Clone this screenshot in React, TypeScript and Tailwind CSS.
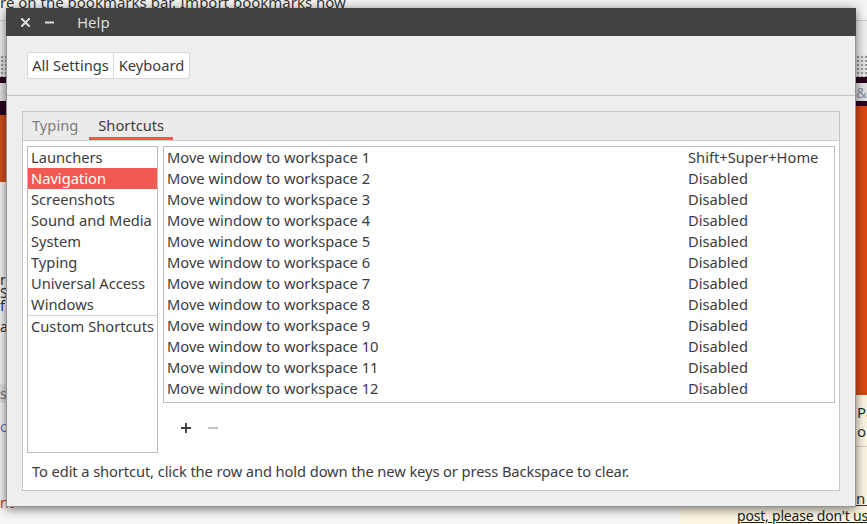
import React from "react";

const categories = [
  "Launchers",
  "Navigation",
  "Screenshots",
  "Sound and Media",
  "System",
  "Typing",
  "Universal Access",
  "Windows",
];

const rows = Array.from({ length: 12 }, (_, i) => ({
  name: `Move window to workspace ${i + 1}`,
  accel: i === 0 ? "Shift+Super+Home" : "Disabled",
}));

function Background() {
  return (
    <div className="flex flex-col w-[867px] h-[524px] bg-white text-[15px] text-[#333]">
      <div className="h-[21px] shrink-0 bg-[#f4f4f3] border-b border-[#cfcfcf] overflow-hidden">
        <p className="-mt-[8px] leading-[21px] whitespace-nowrap">
          re on the bookmarks bar. Import bookmarks now
        </p>
      </div>
      <div className="h-[34px] shrink-0 bg-[#efefef]" />
      <div className="h-[22px] shrink-0 bg-[#e9e9e9] bg-[radial-gradient(#9a9a9a_0.8px,transparent_1px)] bg-[length:4px_4px]" />
      <div className="h-[6px] shrink-0 bg-[#2c001e]" />
      <div className="h-[18px] shrink-0 bg-[#e2e2e2] flex justify-end overflow-hidden">
        <span className="text-[#8a8fa8] leading-[18px]">&amp;</span>
      </div>
      <div className="h-[5px] shrink-0 bg-[#2c001e]" />
      <div className="flex-1 grid grid-cols-[680px_1fr]">
        <div className="flex flex-col bg-[#f7f7f7]">
          <div className="h-[9px] bg-[#2c001e]" />
          <div className="h-[67px] bg-[#d2501c]" />
          <div className="flex flex-col items-start leading-[13px] text-[14px] whitespace-nowrap pt-[91px]">
            <span className="h-[12px]">r</span>
            <span className="h-[12px] mt-px">S</span>
            <span className="h-[12px] mt-px">f</span>
            <span className="mt-[9px]">a</span>
            <span className="mt-[51px] bg-[#e3e3e3] w-[10px] h-[19px] leading-[19px] text-[#777]">s</span>
            <span className="mt-[17px] text-[#5d7fb3]">o</span>
            <span className="mt-[63px] text-[#c8321c]">nt</span>
          </div>
        </div>
        <div className="flex flex-col">
          <div className="h-[289px] bg-[#dd4814]" />
          <div className="flex-1 bg-[#fcf7e2] flex flex-col text-[15px] whitespace-nowrap overflow-hidden">
            <span className="pl-[177px] mt-[8px] leading-[19px]">Pa</span>
            <span className="pl-[177px] leading-[19px]">on</span>
            <div className="h-px bg-[#d6d0b8] mt-[5px]" />
            <span className="pl-[176px] mt-[42px] leading-[18px] underline">n u</span>
            <span className="pl-[57px] leading-[18px] underline text-[#222] text-[14px] tracking-[-0.2px]">post, please don't use</span>
          </div>
        </div>
      </div>
    </div>
  );
}

function Window() {
  return (
    <div className="absolute left-[6px] top-[8px] w-[850px] h-[499px] flex flex-col shadow-[0_2px_10px_rgba(0,0,0,0.55)] text-[14.7px] text-[#3c3c3c]">
      <div className="h-[28px] shrink-0 bg-[#424242] flex items-center">
        <svg className="ml-[15px]" width="9" height="9" viewBox="0 0 9 9">
          <path d="M1 1 L8 8 M8 1 L1 8" stroke="#dcdcdc" strokeWidth="2" strokeLinecap="square" />
        </svg>
        <svg className="ml-[15px]" width="9" height="9" viewBox="0 0 9 9">
          <path d="M0 4.5 L9 4.5" stroke="#dcdcdc" strokeWidth="2" />
        </svg>
        <span className="ml-[23px] text-[15px] text-[#dfdbd2]">Help</span>
      </div>
      <div className="flex-1 flex flex-col bg-[#eeeeee] border-x border-b border-[#959595]">
        <div className="pt-[16px] pl-[20px] flex">
          <div className="flex h-[27px] bg-white border border-[#d9d9d9] rounded-[2px]">
            <div className="w-[86px] border-r border-[#d9d9d9] flex items-center justify-center">
              All Settings
            </div>
            <div className="w-[75px] flex items-center justify-center">Keyboard</div>
          </div>
        </div>
        <div className="mt-[16px] h-px bg-[#c4c4c4]" />
        <div className="flex-1 mt-[15px] mx-[15px] mb-[15px] border border-[#c6c6c6] flex flex-col">
          <div className="h-[29px] shrink-0 bg-[#ebebeb] border-b border-[#cfcfcf] flex">
            <div className="px-[9px] pb-[1px] flex items-center text-[#7d7d7d]">Typing</div>
            <div className="relative ml-[2px] px-[9px] pb-[1px] flex items-center text-[#3c3c3c]">
              Shortcuts
              <div className="absolute left-0 right-0 bottom-0 h-[3px] bg-[#f0544c]" />
            </div>
          </div>
          <div className="flex-1 bg-white flex flex-col pt-[5px] px-[4px]">
            <div className="flex gap-[5px]">
              <div className="w-[131px] h-[307px] shrink-0 border border-[#bdbdbd] flex flex-col">
                {categories.map((c) => (
                  <div
                    key={c}
                    className={
                      c === "Navigation"
                        ? "h-[21px] leading-[21px] pl-[3px] bg-[#f15a50] text-white whitespace-nowrap"
                        : "h-[21px] leading-[21px] pl-[3px] whitespace-nowrap"
                    }
                  >
                    {c}
                  </div>
                ))}
                <div className="h-px bg-[#d4d4d4]" />
                <div className="h-[21px] leading-[21px] pl-[3px] whitespace-nowrap">Custom Shortcuts</div>
              </div>
              <div className="flex-1 flex flex-col">
                <div className="h-[257px] border border-[#bdbdbd] flex flex-col">
                  {rows.map((r) => (
                    <div key={r.name} className="h-[21px] leading-[21px] flex whitespace-nowrap">
                      <span className="w-[524px] pl-[3px]">{r.name}</span>
                      <span>{r.accel}</span>
                    </div>
                  ))}
                </div>
                <div className="mt-[20px] pl-[18px] flex gap-[17px]">
                  <svg width="10" height="10" viewBox="0 0 10 10">
                    <path d="M5 0 V10 M0 5 H10" stroke="#3c3c3c" strokeWidth="1.8" />
                  </svg>
                  <svg width="10" height="10" viewBox="0 0 10 10">
                    <path d="M0 5 H10" stroke="#ababab" strokeWidth="1.4" />
                  </svg>
                </div>
              </div>
            </div>
            <div className="mt-[8px] pl-[5px] h-[21px] leading-[21px] whitespace-nowrap tracking-[-0.1px]">
              To edit a shortcut, click the row and hold down the new keys or press Backspace to clear.
            </div>
          </div>
        </div>
      </div>
    </div>
  );
}

export default function App() {
  return (
    <div className="relative w-[867px] h-[524px] overflow-hidden font-['Noto_Sans',sans-serif]">
      <Background />
      <Window />
    </div>
  );
}
